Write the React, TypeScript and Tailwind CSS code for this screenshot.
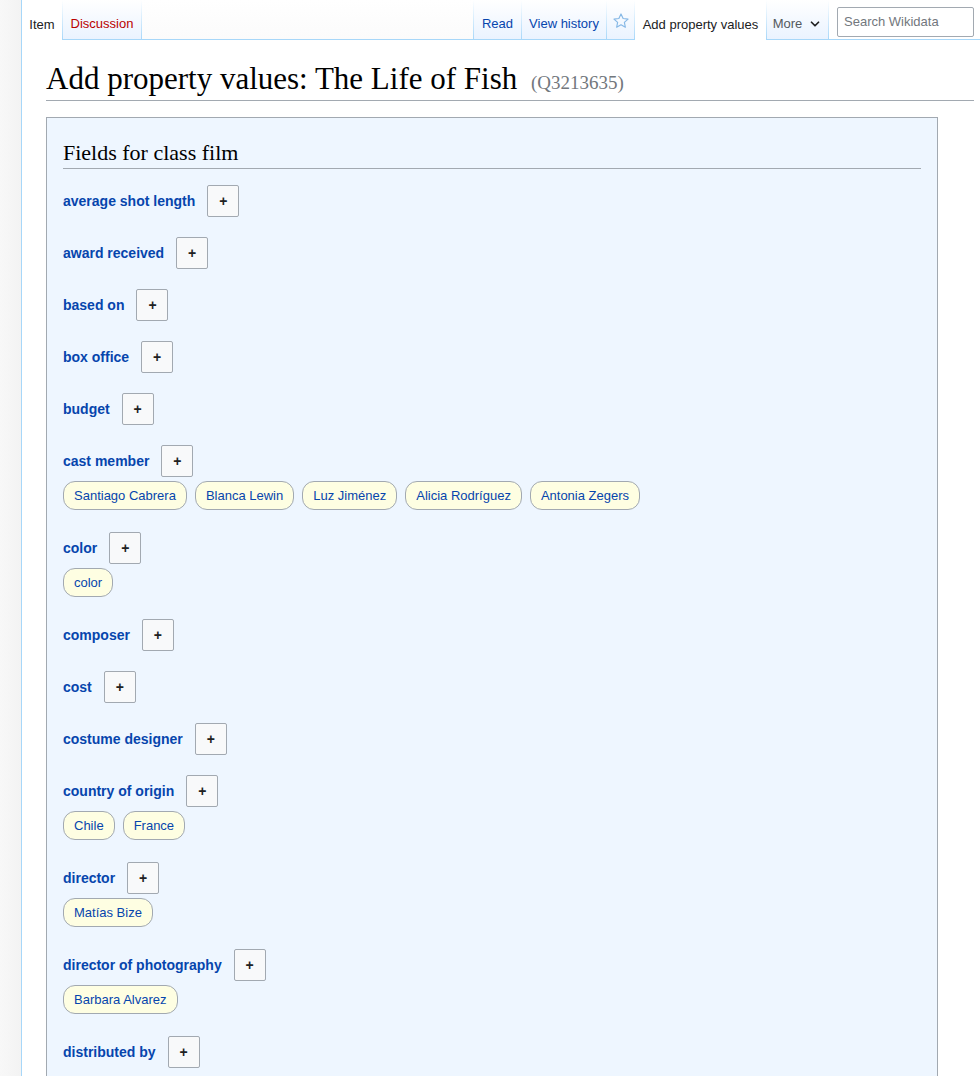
import { ChevronDown } from "lucide-react";

interface Field {
  label: string;
  values: string[];
}

const fields: Field[] = [
  { label: "average shot length", values: [] },
  { label: "award received", values: [] },
  { label: "based on", values: [] },
  { label: "box office", values: [] },
  { label: "budget", values: [] },
  {
    label: "cast member",
    values: ["Santiago Cabrera", "Blanca Lewin", "Luz Jiménez", "Alicia Rodríguez", "Antonia Zegers"],
  },
  { label: "color", values: ["color"] },
  { label: "composer", values: [] },
  { label: "cost", values: [] },
  { label: "costume designer", values: [] },
  { label: "country of origin", values: ["Chile", "France"] },
  { label: "director", values: ["Matías Bize"] },
  { label: "director of photography", values: ["Barbara Alvarez"] },
  { label: "distributed by", values: [] },
  { label: "duration", values: [] },
  { label: "film editor", values: [] },
];

function Sep() {
  return <div className="w-px shrink-0 bg-gradient-to-b from-white to-[#a7d7f9]" />;
}

function Tab({
  label,
  color,
  width,
  selected,
}: {
  label: string;
  color: string;
  width: string;
  selected?: boolean;
}) {
  return (
    <div
      className={
        selected
          ? `${width} shrink-0 flex items-center justify-center pt-[9px] bg-white text-[13px]`
          : `${width} shrink-0 flex items-center justify-center pt-[9px] bg-gradient-to-b from-white to-[#eaf3ff] border-b border-[#a7d7f9] text-[13px]`
      }
      style={{ color }}
    >
      {label}
    </div>
  );
}

function StarIcon() {
  return (
    <svg width="18" height="18" viewBox="0 0 20 20" fill="none">
      <path
        d="M10 2.2l2.35 5.05 5.45.6-4.05 3.7 1.1 5.4L10 14.2l-4.85 2.75 1.1-5.4L2.2 7.85l5.45-.6z"
        stroke="#86b8e6"
        strokeWidth="1.3"
        strokeLinejoin="round"
      />
    </svg>
  );
}

function FieldRow({ field }: { field: Field }) {
  return (
    <div className={field.values.length > 0 ? "mb-[22px]" : "mb-5"}>
      <div className="flex items-center gap-3 h-8">
        <span className="text-[14px] font-bold text-[#0645ad]">{field.label}</span>
        <button className="w-8 h-8 flex items-center justify-center border border-[#a2a9b1] rounded-[2px] bg-[#f8f9fa] text-[14px] font-bold text-[#202122]">
          +
        </button>
      </div>
      {field.values.length > 0 && (
        <div className="flex flex-wrap gap-2 mt-1">
          {field.values.map((v) => (
            <span
              key={v}
              className="h-[29px] flex items-center px-[10px] border border-[#a2a9b1] rounded-[12px] bg-[#fefee2] text-[13px] text-[#0645ad]"
            >
              {v}
            </span>
          ))}
        </div>
      )}
    </div>
  );
}

export default function App() {
  return (
    <div className="min-h-screen flex bg-[#f6f6f6] font-['Liberation_Sans',Arial,sans-serif] text-[#202122]">
      {/* left panel */}
      <div className="w-[21px] shrink-0 bg-gradient-to-r from-[#f8f8f8] to-[#f3f3f3]" />

      <div className="flex-1 min-w-0 bg-white border-l border-[#a7d7f9]">
        {/* tabs */}
        <div className="flex h-10">
          <Tab label="Item" color="#202122" width="w-[40px]" selected />
          <Sep />
          <Tab label="Discussion" color="#ba0000" width="w-[78px]" />
          <Sep />
          <div className="w-[331px] shrink-0 bg-gradient-to-b from-white to-[#fbfbfb] border-b border-[#a7d7f9]" />
          <Sep />
          <Tab label="Read" color="#0645ad" width="w-[47px]" />
          <Sep />
          <Tab label="View history" color="#0645ad" width="w-[84px]" />
          <Sep />
          <div className="w-[27px] shrink-0 flex items-center justify-center pt-[3px] bg-gradient-to-b from-white to-[#eaf3ff] border-b border-[#a7d7f9]">
            <StarIcon />
          </div>
          <Sep />
          <Tab label="Add property values" color="#202122" width="w-[131px]" selected />
          <Sep />
          <div className="w-[61px] shrink-0 flex items-center justify-center gap-[6px] pt-[9px] bg-gradient-to-b from-white to-[#eaf3ff] border-b border-[#a7d7f9] text-[13px] text-[#54595d]">
            More
            <ChevronDown size={14} strokeWidth={3} className="text-[#202122]" />
          </div>
          <Sep />
          <div className="flex-1 bg-white border-b border-[#a7d7f9] pl-2 pr-[6px] pt-[7px]">
            <div className="h-[30px] border border-[#a2a9b1] rounded-[2px] bg-white flex items-center px-[6px] text-[13px] text-[#72777d]">
              Search Wikidata
            </div>
          </div>
        </div>

        {/* content */}
        <div className="pl-6 pr-[6px]">
          <h1 className="mt-5 pb-[3px] border-b border-[#a2a9b1] font-['Liberation_Serif',Georgia,serif] text-[31px] leading-[37px] text-[#000]">
            Add property values: The Life of Fish{" "}
            <span className="ml-[6px] text-[19px] leading-none text-[#72777d]">(Q3213635)</span>
          </h1>

          <div className="mt-4 w-[892px] border border-[#a2a9b1] bg-[#eef6ff] px-4 pt-[21px] pb-6">
            <h2 className="pb-px mb-4 border-b border-[#a2a9b1] font-['Liberation_Serif',Georgia,serif] text-[22px] leading-[28px] text-[#000]">
              Fields for class film
            </h2>
            {fields.map((f) => (
              <FieldRow key={f.label} field={f} />
            ))}
          </div>
        </div>
      </div>
    </div>
  );
}
